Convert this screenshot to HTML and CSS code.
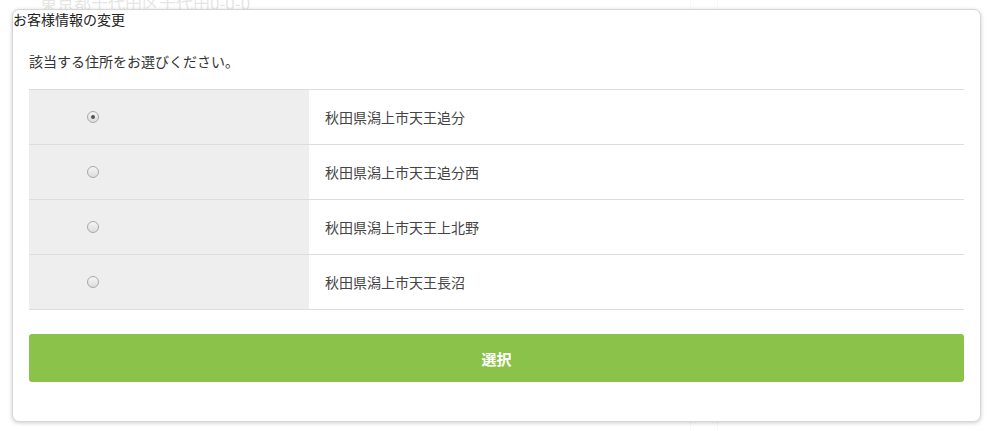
FILE: index.html
```html
<!DOCTYPE html>
<html lang="ja">
<head>
    <meta charset="UTF-8">
    <meta name="viewport" content="width=device-width, initial-scale=1.0">
    <title>お客様情報の変更</title>
    <link rel="stylesheet" href="styles.css">
</head>
<body>
    <!-- 背景のページ（オーバーレイで薄く見える） -->
    <div class="page-bg">
        <div class="bg-main">
            <p class="bg-address">東京都千代田区千代田0-0-0</p>
        </div>
        <div class="bg-gap"></div>
        <div class="bg-side"></div>
    </div>
    <div class="overlay"></div>

    <div class="modal">
        <div class="modal-title">お客様情報の変更</div>
        <div class="modal-body">
            <p class="lead">該当する住所をお選びください。</p>
            <table class="addr-table">
                <tr>
                    <td class="addr-radio"><label class="radio checked"><input type="radio" name="addr" checked></label></td>
                    <td class="addr-name">秋田県潟上市天王追分</td>
                </tr>
                <tr>
                    <td class="addr-radio"><label class="radio"><input type="radio" name="addr"></label></td>
                    <td class="addr-name">秋田県潟上市天王追分西</td>
                </tr>
                <tr>
                    <td class="addr-radio"><label class="radio"><input type="radio" name="addr"></label></td>
                    <td class="addr-name">秋田県潟上市天王上北野</td>
                </tr>
                <tr>
                    <td class="addr-radio"><label class="radio"><input type="radio" name="addr"></label></td>
                    <td class="addr-name">秋田県潟上市天王長沼</td>
                </tr>
            </table>
            <button class="btn-select">選択</button>
        </div>
    </div>
</body>
</html>
```

FILE: styles.css
```css
html, body {
    margin: 0;
    height: 100%;
}
body {
    font-family: "Noto Sans CJK JP", "Liberation Sans", sans-serif;
    background-color: #ffffff;
    color: #333;
    overflow: hidden;
}
.page-bg {
    display: flex;
    height: 100%;
}
.bg-main {
    width: 690px;
    border-right: 1px solid #ddd;
}
.bg-gap {
    width: 26px;
    border-right: 1px solid #ddd;
}
.bg-side {
    flex: 1;
}
.bg-address {
    margin: -10px 0 0 40px;
    font-size: 17px;
    color: #999;
}
.overlay {
    position: absolute;
    inset: 0;
    background: rgba(255, 255, 255, 0.75);
}
.modal {
    position: absolute;
    left: 12px;
    top: 9px;
    width: 969px;
    height: 413px;
    box-sizing: border-box;
    background: #fff;
    border: 1px solid #d6d6d6;
    border-radius: 7px;
    box-shadow: 0 1px 4px rgba(0, 0, 0, 0.2);
}
.modal-title {
    font-size: 14px;
    line-height: 18px;
    color: #222;
}
.modal-body {
    padding: 0 16px;
}
.lead {
    margin: 23px 0 18px;
    font-size: 14px;
    line-height: 20px;
}
.addr-table {
    width: 100%;
    border-collapse: collapse;
    border-top: 1px solid #ddd;
}
.addr-table td {
    height: 54px;
    border-bottom: 1px solid #ddd;
    padding: 0;
    font-size: 14px;
    color: #444;
}
.addr-radio {
    width: 280px;
    background: #eeeeee;
    padding-left: 58px !important;
    box-sizing: border-box;
}
.addr-name {
    padding-left: 16px !important;
}
.radio {
    display: inline-block;
    width: 10px;
    height: 10px;
    border: 1px solid #a8a8a8;
    border-radius: 50%;
    background: linear-gradient(#f6f6f6, #dcdcdc);
    position: relative;
    top: -2px;
    vertical-align: middle;
}
.radio input {
    display: none;
}
.radio.checked::after {
    content: "";
    position: absolute;
    left: 3px;
    top: 3px;
    width: 4px;
    height: 4px;
    border-radius: 50%;
    background: #555;
}
.btn-select {
    display: block;
    width: 100%;
    height: 48px;
    margin-top: 24px;
    border: none;
    border-radius: 3px;
    background-color: #8bc34a;
    color: #fff;
    font-family: inherit;
    font-size: 15px;
    font-weight: bold;
    cursor: pointer;
}
```
